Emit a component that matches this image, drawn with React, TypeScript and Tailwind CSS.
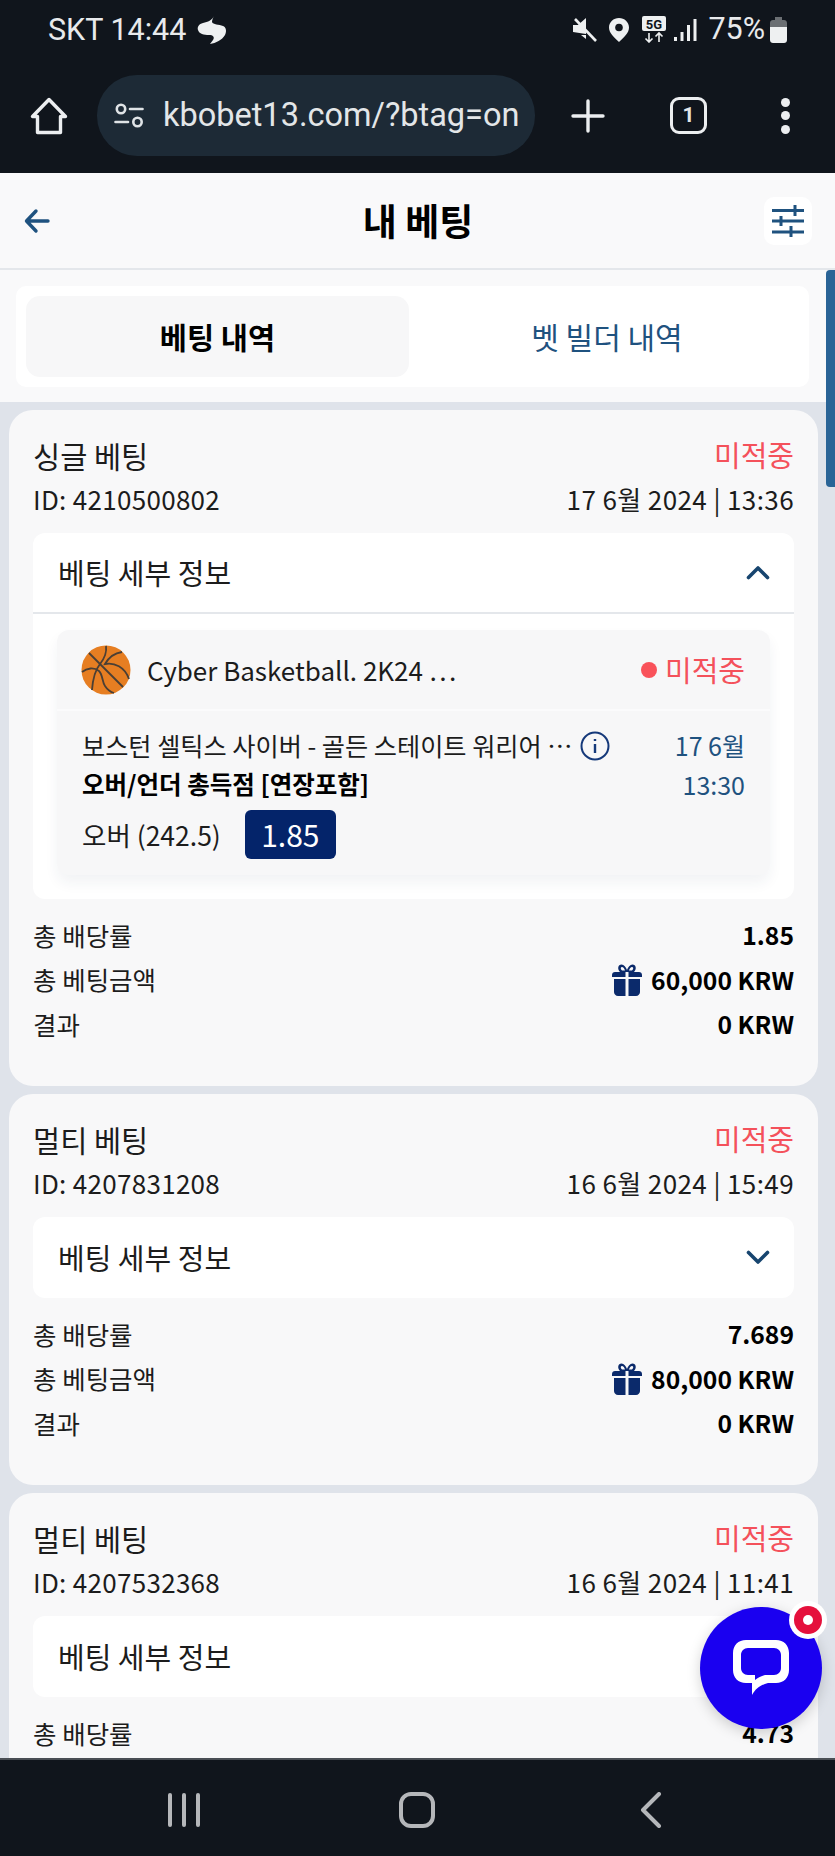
import * as React from 'react';

function HomeIcon() {
  return (
    <svg width="38" height="38" viewBox="0 0 38 38" fill="none" stroke="#eceef0" strokeWidth="3.4" strokeLinejoin="round" strokeLinecap="round">
      <path d="M19 2.5 2.5 19.5H7.5V35.5H30.5V19.5H35.5Z" />
    </svg>
  );
}

function SiteIcon() {
  return (
    <svg width="30" height="28" viewBox="0 0 30 28" fill="none" stroke="#dfe3e6" strokeWidth="2.6" strokeLinecap="round">
      <circle cx="7" cy="7" r="4.2" />
      <path d="M16 7H28.5" />
      <path d="M1.5 20H14" />
      <circle cx="23.5" cy="20" r="4.2" />
    </svg>
  );
}

function SlidersIcon() {
  return (
    <svg width="34" height="34" viewBox="0 0 34 34" fill="none" stroke="#1f527f" strokeWidth="3">
      <path d="M1 6.5H33M24 1V12" />
      <path d="M1 17H33M10 12V22" />
      <path d="M1 28H33M20 22V33" />
    </svg>
  );
}

function Chevron({ up }: { up: boolean }) {
  return (
    <svg width="24" height="15" viewBox="0 0 24 15" fill="none" stroke="#17456f" strokeWidth="3.6" strokeLinecap="round" strokeLinejoin="round">
      <path d={up ? 'M2.5 12.5 12 3l9.5 9.5' : 'M2.5 2.5 12 12l9.5-9.5'} />
    </svg>
  );
}

function Ball() {
  return (
    <svg width="50" height="50" viewBox="0 0 50 50" fill="none" stroke="#4a3f35" strokeWidth="1.8" className="shrink-0">
      <circle cx="25" cy="25" r="24.5" fill="#e67e22" stroke="none" />
      <path d="M8 8 42 42" />
      <path d="M25 1c1 7-2 13-6 18-4 5-7 12-8 26" />
      <path d="M41 7c-7 1-13 5-17 12 9-2 20 3 24 15" />
      <path d="M1 27c5-4 12-5 17-1 4 4 3 11 6 15 2 3 5 6 9 7" />
    </svg>
  );
}

function Gift() {
  return (
    <svg width="30" height="33" viewBox="0 0 30 33" fill="#0b2a6b">
      <path d="M8 9C5 6 6 1.500 9.500 1.500 12 1.500 14 4 15 7 16 4 18 1.500 20.500 1.500 24 1.500 25 6 22 9Z M10 7.500H13C12.500 5.500 11 3.800 9.800 4 8.300 4.300 8.500 6.500 10 7.500Z M17 7.500H20C21.500 6.500 21.700 4.300 20.200 4 19 3.800 17.500 5.500 17 7.500Z" fillRule="evenodd" />
      <path d="M3 9H13.500V14H0V12C0 10.300 1.300 9 3 9Z" />
      <path d="M16.500 9H27C28.700 9 30 10.300 30 12V14H16.500Z" />
      <path d="M2 16H13.500V33H6C3.800 33 2 31.200 2 29Z" />
      <path d="M16.500 16H28V29C28 31.200 26.200 33 24 33H16.500Z" />
    </svg>
  );
}

function ChatWidget() {
  return (
    <div className="absolute left-[700px] top-[1607px] size-[122px] rounded-full bg-[#1a00f0] shadow-[0_4px_14px_rgba(0,0,0,0.18)] flex items-center justify-center">
      <svg width="58" height="58" viewBox="0 0 58 58" fill="none">
        <path d="M14 1H44C51.700 1 57 6.300 57 14V31C57 38.700 51.700 44 44 44H36C29 46 24 49 20 56V44H14C6.300 44 1 38.700 1 31V14C1 6.300 6.300 1 14 1Z" fill="#fff" />
        <path d="M16 9H42C46 9 49 12 49 16V29C49 33 46 36 42 36H33C29 37 26 39 23 41V36H16C12 36 9 33 9 29V16C9 12 12 9 16 9Z" fill="#1a00f0" />
      </svg>
      <div className="absolute left-[89px] top-[-6px] size-[38px] rounded-full bg-white flex items-center justify-center">
        <div className="size-[28px] rounded-full bg-[#e5103c] flex items-center justify-center">
          <div className="size-[10px] rounded-full bg-white" />
        </div>
      </div>
    </div>
  );
}

function StatusBar() {
  return (
    <div className="h-[59px] pl-[48px] pr-[48px] flex items-center justify-between font-['Roboto',sans-serif] text-[30.5px] text-[#e8eaec]">
      <div className="flex items-center gap-[11px]">
        <span>SKT 14:44</span>
        <svg width="30" height="28" viewBox="0 0 30 28" fill="#eef0f1">
          <path d="M17 0C15 4 11 6 6 7 2 8 0 11 1 14 2 18 7 19 12 19 16 19 18 21 16 24L13 28C19 27 25 24 28 19 30 15 29 11 26 10 22 8 16 9 15 6 15 4 16 2 17 0Z" />
        </svg>
      </div>
      <div className="flex items-center">
        <svg width="25" height="25" viewBox="0 0 25 25" fill="#eef0f1" className="mr-[12px]">
          <path d="M1 8H6L14 1V17L1 15Z" />
          <path d="M3 2 24 24" stroke="#eef0f1" strokeWidth="2.600" />
          <path d="M9 18H14V22Z" />
        </svg>
        <svg width="20" height="24" viewBox="0 0 20 24" className="mr-[13px]">
          <path d="M10 0C4.500 0 0 4.200 0 9.500 0 15 5 19 10 24 15 19 20 15 20 9.500 20 4.200 15.500 0 10 0Z" fill="#eef0f1" />
          <circle cx="10" cy="9.500" r="3.800" fill="#10151c" />
        </svg>
        <svg width="24" height="27" viewBox="0 0 24 27" className="mr-[8px]">
          <rect x="0" y="0" width="24" height="15" rx="2" fill="#eef0f1" />
          <text x="12" y="12.500" textAnchor="middle" fontFamily="Roboto, sans-serif" fontWeight="700" fontSize="13" fill="#10151c">5G</text>
          <path d="M7 17V26M3.500 22.500 7 26l3.500-3.500M17 26V17M13.500 20.500 17 17l3.500 3.500" fill="none" stroke="#eef0f1" strokeWidth="1.600" />
        </svg>
        <svg width="23" height="24" viewBox="0 0 23 24" fill="#eef0f1" className="mr-[11px]">
          <rect x="0" y="19" width="3" height="4" />
          <rect x="6.500" y="14" width="3" height="9" />
          <rect x="13" y="7" width="3" height="16" />
          <rect x="19.500" y="1" width="3" height="22" />
        </svg>
        <span className="leading-none">75%</span>
        <svg width="17" height="26" viewBox="0 0 17 26" className="ml-[5px]">
          <path d="M5 0H12V3H14C15.700 3 17 4.300 17 6V10H0V6C0 4.300 1.300 3 3 3H5Z" fill="#6b6f73" />
          <path d="M0 10H17V23C17 24.700 15.700 26 14 26H3C1.300 26 0 24.700 0 23Z" fill="#eef0f1" />
        </svg>
      </div>
    </div>
  );
}

function BrowserBar() {
  return (
    <div className="h-[114px] flex items-start pt-[16px] font-['Roboto',sans-serif] text-[#e3e6e8]">
      <div className="w-[97px] h-[81px] flex items-center justify-center">
        <HomeIcon />
      </div>
      <div className="w-[438px] h-[81px] rounded-[40px] bg-[#1d2a36] flex items-center pl-[17px] overflow-hidden">
        <SiteIcon />
        <span className="ml-[19px] text-[32.5px] whitespace-nowrap">kbobet13.com/?btag=on</span>
      </div>
      <div className="flex-1 h-[81px] flex items-center">
        <svg width="34" height="34" viewBox="0 0 34 34" stroke="#eceef0" strokeWidth="3.400" strokeLinecap="round" className="ml-[36px]">
          <path d="M17 2V32M2 17H32" />
        </svg>
        <div className="ml-[65px] size-[37px] rounded-[9px] border-[3.5px] border-[#eceef0] flex items-center justify-center text-[21px] font-bold leading-none">
          1
        </div>
        <div className="ml-[74px] flex flex-col gap-[4.5px]">
          <div className="size-[9px] rounded-full bg-[#eceef0]" />
          <div className="size-[9px] rounded-full bg-[#eceef0]" />
          <div className="size-[9px] rounded-full bg-[#eceef0]" />
        </div>
      </div>
    </div>
  );
}

function Header() {
  return (
    <div className="h-[97px] shrink-0 bg-[#f9f9fa] border-b-2 border-[#e4e7eb] flex items-center justify-between pl-[24px] pr-[23px]">
      <div className="w-[48px]">
        <svg width="26" height="26" viewBox="0 0 26 26" fill="none" stroke="#1f527f" strokeWidth="3.400" strokeLinecap="round" strokeLinejoin="round">
          <path d="M12 3 2.500 13 12 23M3 13H24" />
        </svg>
      </div>
      <div className="text-[37px] font-bold text-black leading-none">내 베팅</div>
      <div className="size-[48px] rounded-[10px] bg-white flex items-center justify-center">
        <SlidersIcon />
      </div>
    </div>
  );
}

function Tabs() {
  return (
    <div className="bg-[#f9f9fa] pt-[16px] pb-[15px] pl-[16px] pr-[26px]">
      <div className="h-[101px] rounded-[10px] bg-white p-[10px] flex">
        <div className="w-[383px] rounded-[14px] bg-[#f7f7f8] flex items-center justify-center text-[29.5px] font-bold text-black">
          베팅 내역
        </div>
        <div className="flex-1 pl-[6px] flex items-center justify-center text-[30px] text-[#1f527f]">
          벳 빌더 내역
        </div>
      </div>
    </div>
  );
}

type Bet = {
  type: string;
  id: string;
  date: string;
  odds: string;
  stake?: string;
  open?: boolean;
};

function Selection() {
  return (
    <div className="mt-[16px] mx-[24px] h-[245px] rounded-[12px] bg-[#f7f7f8] shadow-[0_8px_14px_rgba(30,50,80,0.06)]">
      <div className="h-[81px] border-b-2 border-[#fbfbfc] pl-[24px] pr-[25px] flex items-center">
        <Ball />
        <span className="ml-[16px] text-[26px] text-[#1c1c1c] whitespace-nowrap">Cyber Basketball. 2K24 …</span>
        <div className="ml-auto size-[16px] rounded-full bg-[#f9525a]" />
        <span className="ml-[8px] text-[29px] text-[#f4515b]">미적중</span>
      </div>
      <div className="pl-[25px] pr-[25px] pt-[15px]">
        <div className="h-[40px] flex items-center">
          <span className="text-[25.2px] text-[#1c1c1c] whitespace-nowrap">보스턴 셀틱스 사이버 - 골든 스테이트 워리어 …</span>
          <svg width="30" height="30" viewBox="0 0 30 30" fill="none" stroke="#15397a" strokeWidth="2" className="ml-auto shrink-0">
            <circle cx="15" cy="15" r="13.500" />
            <path d="M15 13V22M15 8V10" strokeWidth="2.400" />
          </svg>
          <span className="ml-[65px] text-[25px] text-[#1f527f] whitespace-nowrap">17 6월</span>
        </div>
        <div className="h-[37px] flex items-center">
          <span className="text-[24.5px] font-bold text-black">오버/언더 총득점 [연장포함]</span>
          <span className="ml-auto text-[25px] text-[#1f527f]">13:30</span>
        </div>
        <div className="mt-[7px] flex items-center">
          <span className="text-[26.5px] text-[#1c1c1c]">오버 (242.5)</span>
          <div className="ml-[24px] w-[91px] h-[49px] rounded-[6px] bg-[#04246a] flex items-center justify-center text-[30px] text-white">
            1.85
          </div>
        </div>
      </div>
    </div>
  );
}

function BetCard({ bet }: { bet: Bet }) {
  return (
    <div className="rounded-[24px] bg-[#f8f8f9] pt-[23px] pb-[40px] px-[24px] shrink-0">
      <div className="h-[44px] flex items-center justify-between text-[29.5px]">
        <span className="text-[#1c1c1c]">{bet.type}</span>
        <span className="text-[#f4515b] text-[29px]">미적중</span>
      </div>
      <div className="h-[42px] flex items-center justify-between text-[26px] tracking-[0.3px] text-[#1c1c1c]">
        <span>ID: {bet.id}</span>
        <span className="tracking-[0.4px]">{bet.date}</span>
      </div>
      <div className={`mt-[14px] rounded-[12px] bg-white ${bet.open ? 'pb-[24px]' : ''}`}>
        <div className={`flex items-center justify-between pl-[25px] pr-[24px] h-[81px] ${bet.open ? 'border-b-2 border-[#e4e7eb]' : ''}`}>
          <span className="text-[29px] text-[#1c1c1c]">베팅 세부 정보</span>
          <Chevron up={!!bet.open} />
        </div>
        {bet.open && <Selection />}
      </div>
      <div className="mt-[14px] text-[25.5px] text-[#1c1c1c]">
        <div className="h-[44px] flex items-center justify-between">
          <span>총 배당률</span>
          <span className="text-[24.7px] font-bold text-black">{bet.odds}</span>
        </div>
        {bet.stake && (
          <>
            <div className="h-[45px] flex items-center justify-between">
              <span>총 베팅금액</span>
              <span className="flex items-center gap-[9px] text-[24.7px] font-bold text-black">
                <Gift />
                {bet.stake}
              </span>
            </div>
            <div className="h-[44px] flex items-center justify-between">
              <span>결과</span>
              <span className="text-[24.7px] font-bold text-black">0 KRW</span>
            </div>
          </>
        )}
      </div>
    </div>
  );
}

const bets: Bet[] = [
  { type: '싱글 베팅', id: '4210500802', date: '17 6월 2024 | 13:36', odds: '1.85', stake: '60,000 KRW', open: true },
  { type: '멀티 베팅', id: '4207831208', date: '16 6월 2024 | 15:49', odds: '7.689', stake: '80,000 KRW' },
  { type: '멀티 베팅', id: '4207532368', date: '16 6월 2024 | 11:41', odds: '4.73' },
];

export default function App() {
  return (
    <div className="relative w-[835px] h-[1856px] overflow-hidden bg-[#10151c] flex flex-col font-['Noto_Sans_CJK_KR',sans-serif]">
      <StatusBar />
      <BrowserBar />
      <div className="h-[1585px] shrink-0 bg-[#dfe3ea] overflow-hidden">
        <Header />
        <Tabs />
        <div className="pt-[8px] pl-[9px] pr-[17px] flex flex-col gap-[8px]">
          {bets.map((bet) => (
            <BetCard key={bet.id} bet={bet} />
          ))}
        </div>
      </div>
      <div className="flex-1 border-t-2 border-[#4a4f55] flex items-start">
        <div className="ml-[168px] mt-[33px] flex gap-[10px]">
          <div className="w-[4px] h-[34px] rounded-full bg-[#b5b7ba]" />
          <div className="w-[4px] h-[34px] rounded-full bg-[#b5b7ba]" />
          <div className="w-[4px] h-[34px] rounded-full bg-[#b5b7ba]" />
        </div>
        <div className="ml-[199px] mt-[32px] size-[36px] rounded-[12px] border-[4px] border-[#b5b7ba]" />
        <svg width="22" height="36" viewBox="0 0 22 36" fill="none" stroke="#b5b7ba" strokeWidth="4" strokeLinecap="round" strokeLinejoin="round" className="ml-[205px] mt-[32px]">
          <path d="M19 2 3 18l16 16" />
        </svg>
      </div>
      <div className="absolute left-[826px] top-[270px] w-[9px] h-[217px] rounded-l-[4px] bg-[#2a6496]" />
      <ChatWidget />
    </div>
  );
}
